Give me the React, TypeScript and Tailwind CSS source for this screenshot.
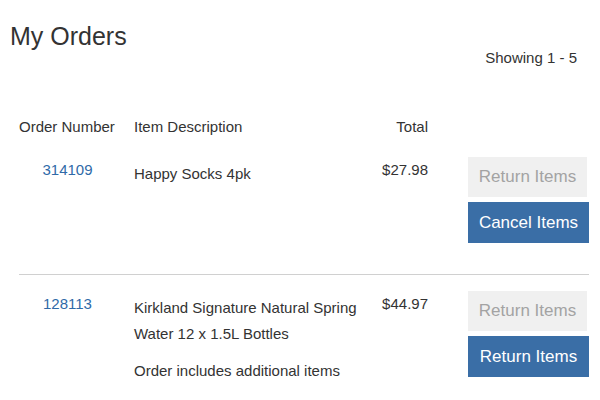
type Order = {
  id: string;
  lines: string[];
  note?: string;
  total: string;
  action: string;
};

const orders: Order[] = [
  { id: "314109", lines: ["Happy Socks 4pk"], total: "$27.98", action: "Cancel Items" },
  {
    id: "128113",
    lines: ["Kirkland Signature Natural Spring Water 12 x 1.5L Bottles"],
    note: "Order includes additional items",
    total: "$44.97",
    action: "Return Items",
  },
];

function OrderRow({ order }: { order: Order }) {
  return (
    <div className="grid grid-cols-[115px_236px_58px_40px_121px] text-[15px]">
      <a href="#" className="leading-[26px] text-[#2f6aa8] pr-[18px] text-center">
        {order.id}
      </a>
      <div className="mt-[4px] leading-[26px] pr-[10px]">
        {order.lines.map((l) => (
          <p key={l}>{l}</p>
        ))}
        {order.note && <p className="mt-[11px]">{order.note}</p>}
      </div>
      <div className="leading-[26px] text-right">{order.total}</div>
      <div />
      <div className="flex flex-col gap-[5px]">
        <button className="h-[40px] w-[119px] bg-[#f0f0f0] text-[#a3a3a3] text-[17px]">
          Return Items
        </button>
        <button className="h-[41px] w-[121px] bg-[#3a6ea6] text-white text-[17px]">
          {order.action}
        </button>
      </div>
    </div>
  );
}

export default function App() {
  return (
    <div className="w-[600px] h-[400px] overflow-hidden bg-white text-[#333] font-['Liberation_Sans',Arial,sans-serif]">
      <div className="flex justify-between items-start">
        <h1 className="pl-[10px] pt-[20px] text-[25px] leading-[32px]">My Orders</h1>
        <p className="pt-[48px] pr-[23px] text-[15px] leading-[20px]">Showing 1 - 5</p>
      </div>

      <div className="ml-[19px] w-[570px] mt-[46px]">
        <div className="grid grid-cols-[115px_236px_58px_40px_121px] text-[15px] leading-[26px]">
          <span>Order Number</span>
          <span>Item Description</span>
          <span className="text-right">Total</span>
        </div>

        <div className="mt-[17px]">
          <OrderRow order={orders[0]} />
        </div>
        <div className="mt-[31px] border-t border-[#d0d0d0] pt-[16px]">
          <OrderRow order={orders[1]} />
        </div>
      </div>
    </div>
  );
}
